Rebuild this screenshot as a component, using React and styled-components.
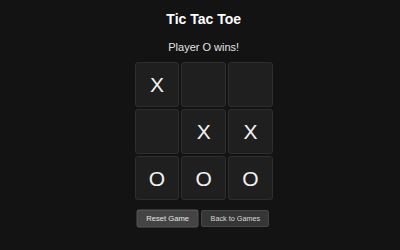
import React, { useState } from "react";
import styled, { createGlobalStyle } from "styled-components";

const GlobalStyle = createGlobalStyle`
  html, body {
    margin: 0;
    padding: 0;
    background: #131313;
  }
  body {
    font-family: "Liberation Sans", Arial, sans-serif;
  }
`;

const Page = styled.div`
  width: 400px;
  height: 250px;
  box-sizing: border-box;
  padding: 11px 0 0 7.4px;
  display: flex;
  flex-direction: column;
  align-items: center;
  background: #131313;
  color: #fff;
`;

const Title = styled.h1`
  margin: 0;
  font-size: 14px;
  line-height: 16px;
  font-weight: bold;
  color: #fff;
`;

const Status = styled.div`
  margin-top: 13.7px;
  font-size: 11px;
  line-height: 13px;
  color: #e2e2e2;
`;

const Board = styled.div`
  margin-top: 8.6px;
  display: grid;
  grid-template-columns: repeat(3, 44.5px);
  grid-auto-rows: 44.5px;
  gap: 2.25px;
`;

const Cell = styled.button`
  box-sizing: border-box;
  width: 100%;
  height: 100%;
  padding: 0;
  margin: 0;
  background: #1f1f1f;
  border: 1px solid #2e2e2e;
  border-radius: 3px;
  color: #f2f2f2;
  font-family: "Liberation Sans", Arial, sans-serif;
  font-size: 21px;
  line-height: 1;
  display: flex;
  align-items: center;
  justify-content: center;
  cursor: pointer;
`;

const Actions = styled.div`
  margin-top: 10px;
  display: flex;
  align-items: center;
  gap: 4px;
`;

const Button = styled.button`
  box-sizing: border-box;
  height: 16.5px;
  padding: 0 8.3px;
  background: ${(p) => (p.$hover ? "#444444" : "#363636")};
  border: 1px solid ${(p) => (p.$hover ? "#565656" : "#464646")};
  border-radius: 2px;
  color: ${(p) => (p.$hover ? "#e6e6e6" : "#d8d8d8")};
  font-family: "Liberation Sans", Arial, sans-serif;
  font-size: 7.25px;
  line-height: 1;
  cursor: pointer;
  transform: ${(p) => (p.$hover ? "scale(1.05)" : "none")};
`;

const initial = ["X", "", "", "", "X", "X", "O", "O", "O"];

export default function App() {
  const [squares] = useState(initial);

  return (
    <>
      <GlobalStyle />
      <Page>
        <Title>Tic Tac Toe</Title>
        <Status>Player O wins!</Status>
        <Board>
          {squares.map((v, i) => (
            <Cell key={i}>{v}</Cell>
          ))}
        </Board>
        <Actions>
          <Button $hover>Reset Game</Button>
          <Button>Back to Games</Button>
        </Actions>
      </Page>
    </>
  );
}
